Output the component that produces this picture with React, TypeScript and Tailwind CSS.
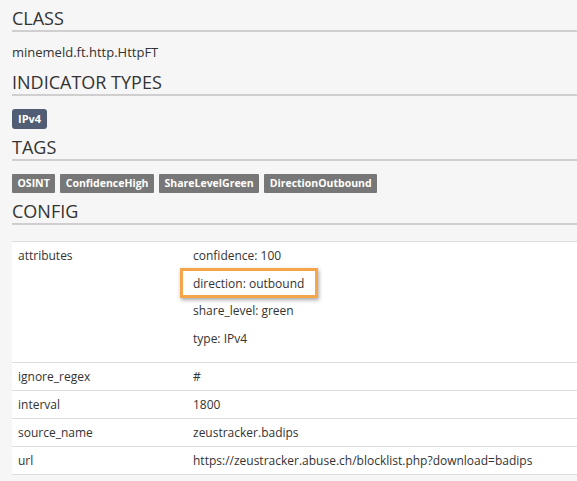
import React from "react";

const font = { fontFamily: '"Open Sans", "Noto Sans", sans-serif' };

function Heading({ children, className = "" }: { children: React.ReactNode; className?: string }) {
  return (
    <h2
      className={`text-[18px] leading-[24px] font-normal text-[#333] border-b-2 border-[#cfcfcf] ${className}`}
    >
      {children}
    </h2>
  );
}

const tags = ["OSINT", "ConfidenceHigh", "ShareLevelGreen", "DirectionOutbound"];

const attributes = ["confidence: 100", "direction: outbound", "share_level: green", "type: IPv4"];

const rows: [string, string][] = [
  ["ignore_regex", "#"],
  ["interval", "1800"],
  ["source_name", "zeustracker.badips"],
  ["url", "https://zeustracker.abuse.ch/blocklist.php?download=badips"],
];

export default function App() {
  return (
    <div className="w-[577px] h-[481px] overflow-hidden bg-[#f6f6f6] pl-[12px] text-[#333]" style={font}>
      <Heading className="mt-[6px]">CLASS</Heading>
      <div className="mt-[10px] text-[13px] leading-[20px]">minemeld.ft.http.HttpFT</div>

      <Heading className="mt-[8px]">INDICATOR TYPES</Heading>
      <div className="mt-[13px] flex">
        <span className="h-[20px] px-[6px] rounded-[3px] bg-[#505d75] text-white text-[11px] font-bold leading-[20px]">
          IPv4
        </span>
      </div>

      <Heading className="mt-[6px]">TAGS</Heading>
      <div className="mt-[13px] flex gap-[5px]">
        {tags.map((t) => (
          <span
            key={t}
            className="h-[19px] px-[5.5px] rounded-[1px] bg-[#777] text-white text-[10.5px] font-bold leading-[19px]"
          >
            {t}
          </span>
        ))}
      </div>

      <Heading className="mt-[6px]">CONFIG</Heading>

      <div className="mt-[16px] bg-white border-t border-[#dddddd] border-b text-[12px] leading-[19px]">
        <div className="grid grid-cols-[175px_1fr]">
          <div className="pl-[6px] pt-[4px]">attributes</div>
          <div className="pl-[6px] pt-[4px] pb-[14px] flex flex-col gap-[8.5px]">
            {attributes.map((a) => (
              <div key={a}>
                {a === "direction: outbound" ? (
                  <span className="relative inline-block">
                    {a}
                    <span className="absolute -left-[13px] -right-[14px] -top-[5.5px] -bottom-[5.5px] border-[3px] border-[#f5a64a] shadow-[1px_2px_4px_rgba(0,0,0,0.35)]" />
                  </span>
                ) : (
                  a
                )}
              </div>
            ))}
          </div>
        </div>
        {rows.map(([k, v]) => (
          <div key={k} className="grid grid-cols-[175px_1fr] border-t border-[#dddddd]">
            <div className="pl-[6px] py-[4px]">{k}</div>
            <div className="pl-[6px] py-[4px] whitespace-nowrap">{v}</div>
          </div>
        ))}
      </div>
    </div>
  );
}
